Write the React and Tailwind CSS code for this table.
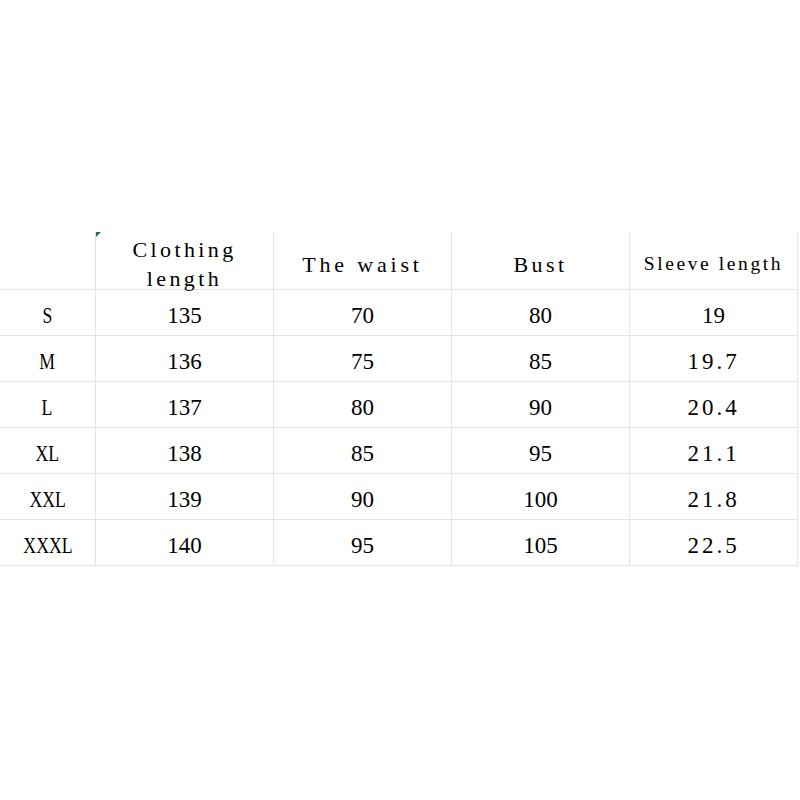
import React from 'react';

const rows = [
  ['S', '135', '70', '80', '19'],
  ['M', '136', '75', '85', '19.7'],
  ['L', '137', '80', '90', '20.4'],
  ['XL', '138', '85', '95', '21.1'],
  ['XXL', '139', '90', '100', '21.8'],
  ['XXXL', '140', '95', '105', '22.5'],
];

const serif = { fontFamily: '"Liberation Serif", "Times New Roman", serif' };

function cellClass(v) {
  if (v.includes('.')) return 'tracking-[3px]';
  return '';
}

export default function App() {
  return (
    <div className="w-[800px] h-[800px] bg-white text-black">
      <div className="h-[232px]" />
      <div className="grid grid-cols-[96px_178px_178px_178px_168px] w-[798px]" style={serif}>
        {/* header */}
        <div className="h-[58px] border-r border-b border-[#e4e4e4]" />
        <div className="relative h-[58px] border-r border-b border-[#e4e4e4] flex flex-col items-center justify-center text-[22px] leading-[29px] tracking-[3.4px] pt-[7px]">
          <span className="absolute left-0 top-0 w-0 h-0 border-t-[5px] border-r-[5px] border-t-[#1f7a3a] border-r-transparent" />
          <span>Clothing</span>
          <span>length</span>
        </div>
        <div className="h-[58px] border-r border-b border-[#e4e4e4] flex items-center justify-center text-[22px] tracking-[3.8px] pt-[7px]">
          The waist
        </div>
        <div className="h-[58px] border-r border-b border-[#e4e4e4] flex items-center justify-center text-[22px] tracking-[3.4px] pt-[7px]">
          Bust
        </div>
        <div className="h-[58px] border-r border-b border-[#e4e4e4] flex items-center justify-center text-[19.5px] tracking-[2.6px] pt-[7px]">
          Sleeve length
        </div>

        {rows.map((r) => (
          <React.Fragment key={r[0]}>
            {r.map((v, i) => (
              <div
                key={i}
                className={
                  'h-[46px] border-r border-b border-[#e4e4e4] flex items-center justify-center leading-[26px] text-[23px] pt-[6px] ' +
                  cellClass(v)
                }
              >
                {i === 0 ? <span className="inline-block scale-x-[0.77]">{v}</span> : v}
              </div>
            ))}
          </React.Fragment>
        ))}
      </div>
    </div>
  );
}
